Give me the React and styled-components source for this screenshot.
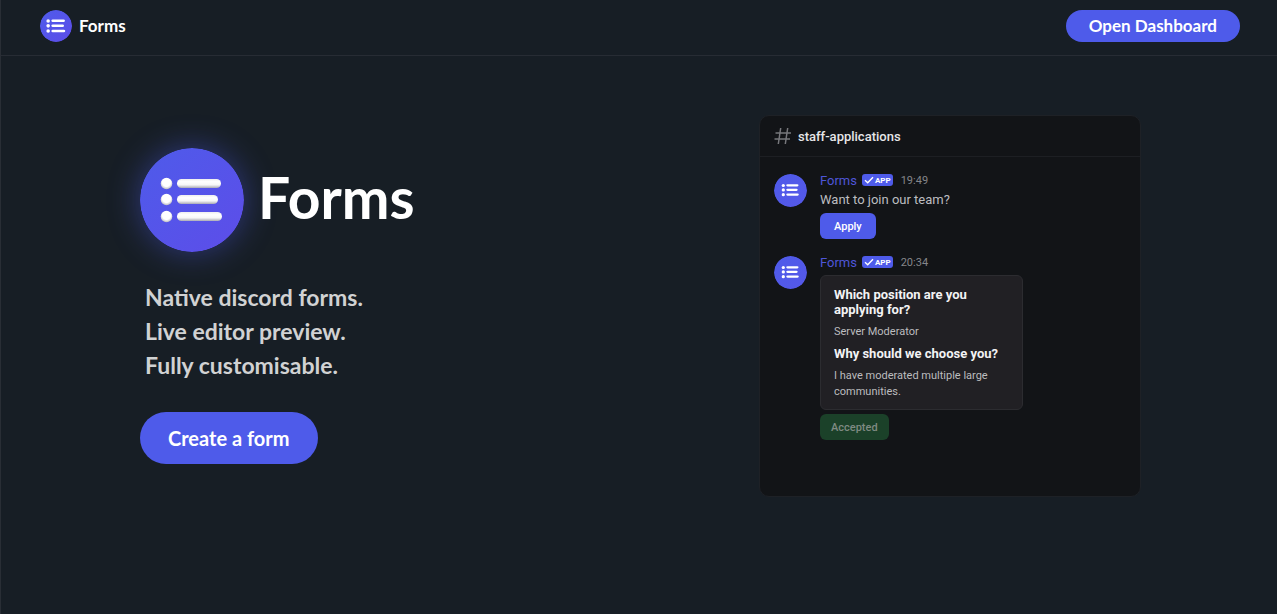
import React from "react";
import styled, { createGlobalStyle } from "styled-components";

const GlobalStyle = createGlobalStyle`
  * { box-sizing: border-box; }
  body {
    margin: 0;
    background: #171e25;
    color: #fff;
    font-family: Lato, "Open Sans", sans-serif;
  }
  button { border: none; font-family: inherit; cursor: pointer; }
  h1, p { margin: 0; }
`;

const Page = styled.div`
  min-height: 100vh;
  border-left: 1px solid #292e35;
`;

const Header = styled.header`
  display: flex;
  align-items: center;
  justify-content: space-between;
  height: 56px;
  padding: 0 37px 4px 39px;
  border-bottom: 1px solid #272c34;
`;

const Brand = styled.a`
  display: flex;
  align-items: center;
  gap: 7px;
  color: #fff;
  font-size: 17px;
  font-weight: 700;
  text-decoration: none;
`;

const PillButton = styled.button`
  height: ${p => (p.$large ? 52 : 32)}px;
  padding: 0 ${p => (p.$large ? 28 : 23)}px;
  border-radius: 26px;
  background: #4e5bea;
  color: #fff;
  font-size: ${p => (p.$large ? 20 : 17)}px;
  font-weight: 700;
`;

const Hero = styled.main`
  display: flex;
  justify-content: space-between;
  align-items: flex-start;
  padding: 59px 136px 0 139px;
`;

const Intro = styled.section`
  display: flex;
  flex-direction: column;
  align-items: flex-start;
  padding-top: 33px;
`;

const TitleRow = styled.div`
  display: flex;
  align-items: center;
  gap: 14px;
`;

const Title = styled.h1`
  padding-bottom: 6px;
  font-size: 57px;
  line-height: 68px;
  font-weight: 700;
`;

const Tagline = styled.p`
  margin: 28px 0 30px 5px;
  color: #d1d2d3;
  font-size: 23px;
  line-height: 34px;
  font-weight: 700;
`;

const LogoSvg = styled.svg`
  display: block;
  flex: none;
  border-radius: 50%;
  box-shadow: ${p => (p.$glow ? "0 0 32px rgba(78, 91, 234, 0.45)" : "none")};
`;

const Channel = styled.section`
  width: 382px;
  height: 382px;
  border: 1px solid #1e2126;
  border-radius: 10px;
  background: #121417;
  font-family: Roboto, sans-serif;
`;

const ChannelHeader = styled.div`
  display: flex;
  align-items: center;
  gap: 6px;
  height: 41px;
  padding-left: 14px;
  border-bottom: 1px solid #1d1f23;
  color: #e6e6e8;
  font-size: 13px;
  font-weight: 500;
`;

const Message = styled.article`
  display: flex;
  align-items: flex-start;
  gap: 13px;
  padding: 15px 0 0 14px;
`;

const AvatarWrap = styled.div`
  padding-top: 2px;
`;

const Author = styled.div`
  display: flex;
  align-items: center;
  height: 16px;
  color: #4e56d8;
  font-size: 13px;
`;

const AppBadge = styled.span`
  display: flex;
  align-items: center;
  gap: 1px;
  height: 12px;
  margin: 0 8px 0 5px;
  padding: 0 2px;
  border-radius: 3px;
  background: #4e5bea;
  color: #fff;
  font-size: 8px;
  font-weight: 700;
`;

const Time = styled.time`
  color: #85868a;
  font-size: 11px;
`;

const MessageText = styled.p`
  color: #bcbdc0;
  font-size: 13px;
  line-height: 16px;
  padding: 4px 0 5px;
`;

const ChatButton = styled.button`
  display: block;
  height: 26px;
  padding: 0 ${p => (p.$accepted ? 11 : 14)}px;
  border-radius: 6px;
  background: ${p => (p.$accepted ? "#1b4129" : "#4e5bea")};
  color: ${p => (p.$accepted ? "#7f8a82" : "#fff")};
  font-size: 11px;
  font-weight: 500;
`;

const Embed = styled.dl`
  width: 203px;
  margin: 5px 0 4px;
  padding: 11px 13px 3px;
  border: 1px solid #2c2c30;
  border-radius: 6px;
  background: #212024;
`;

const Question = styled.dt`
  color: #f3f3f4;
  font-size: 13px;
  line-height: 15px;
  font-weight: 700;
`;

const Answer = styled.dd`
  margin: 0;
  padding: 7px 0 6px;
  color: #bcbcbf;
  font-size: 11px;
  line-height: 16px;
`;

function Logo({ size, glow, flat, small }) {
  const id = `logo-${size}`;
  const lines = [
    { y: 35, w: 44 },
    { y: 51, w: 41 },
    { y: 68, w: 45 },
  ];
  return (
    <LogoSvg width={size} height={size} viewBox="0 0 104 104" $glow={glow} aria-hidden="true">
      <defs>
        <linearGradient id={id} x1="0" y1="0" x2="1" y2="1">
          <stop offset="0" stopColor="#4e5bea" />
          <stop offset="1" stopColor={small ? "#5558e8" : "#5d4de9"} />
        </linearGradient>
        <linearGradient id={`${id}-bar`} x1="0" y1="0" x2="0" y2="1">
          <stop offset="0" stopColor="#eeeeee" />
          <stop offset="0.3" stopColor="#ffffff" />
          <stop offset="0.65" stopColor="#f7f7f7" />
          <stop offset="1" stopColor="#a9a9b4" />
        </linearGradient>
        <radialGradient id={`${id}-dot`} cx="0.5" cy="0.4" r="0.6">
          <stop offset="0.6" stopColor="#ffffff" />
          <stop offset="1" stopColor="#b5b5be" />
        </radialGradient>
      </defs>
      <circle cx="52" cy="52" r="52" fill={`url(#${id})`} />
      <g transform={small ? "translate(6 5) scale(0.88)" : undefined}>
        {lines.map(({ y, w }) => (
          <g key={y}>
            <circle cx="26.5" cy={y + 0.5} r="5.8" fill={flat ? "#fff" : `url(#${id}-dot)`} />
            <rect
              x="37"
              y={y - 4}
              width={w}
              height={flat ? 8 : 9}
              rx="4.5"
              fill={flat ? "#fff" : `url(#${id}-bar)`}
            />
          </g>
        ))}
      </g>
    </LogoSvg>
  );
}

function MessageAuthor({ time }) {
  return (
    <Author>
      Forms
      <AppBadge>
        <svg width="10" height="8" viewBox="0 0 10 8" fill="none" stroke="#fff" strokeWidth="1.4">
          <path d="M1 4.2 3.7 6.7 9 1.2" />
        </svg>
        APP
      </AppBadge>
      <Time>{time}</Time>
    </Author>
  );
}

export default function App() {
  return (
    <Page>
      <GlobalStyle />
      <Header>
        <Brand href="#">
          <Logo size={32} flat />
          Forms
        </Brand>
        <PillButton>Open Dashboard</PillButton>
      </Header>
      <Hero>
        <Intro>
          <TitleRow>
            <Logo size={104} glow />
            <Title>Forms</Title>
          </TitleRow>
          <Tagline>
            Native discord forms.
            <br />
            Live editor preview.
            <br />
            Fully customisable.
          </Tagline>
          <PillButton $large>Create a form</PillButton>
        </Intro>
        <Channel>
          <ChannelHeader>
            <svg width="18" height="18" viewBox="0 0 18 18" fill="none" stroke="#77787c" strokeWidth="1.5">
              <path d="M6.7 1 4.3 17M13.7 1 11.3 17M1.5 6h15.5M.5 12h15.5" />
            </svg>
            staff-applications
          </ChannelHeader>
          <Message>
            <AvatarWrap>
              <Logo size={33} flat small />
            </AvatarWrap>
            <div>
              <MessageAuthor time="19:49" />
              <MessageText>Want to join our team?</MessageText>
              <ChatButton>Apply</ChatButton>
            </div>
          </Message>
          <Message>
            <AvatarWrap>
              <Logo size={33} flat small />
            </AvatarWrap>
            <div>
              <MessageAuthor time="20:34" />
              <Embed>
                <Question>Which position are you applying for?</Question>
                <Answer>Server Moderator</Answer>
                <Question>Why should we choose you?</Question>
                <Answer>I have moderated multiple large communities.</Answer>
              </Embed>
              <ChatButton $accepted>Accepted</ChatButton>
            </div>
          </Message>
        </Channel>
      </Hero>
    </Page>
  );
}
